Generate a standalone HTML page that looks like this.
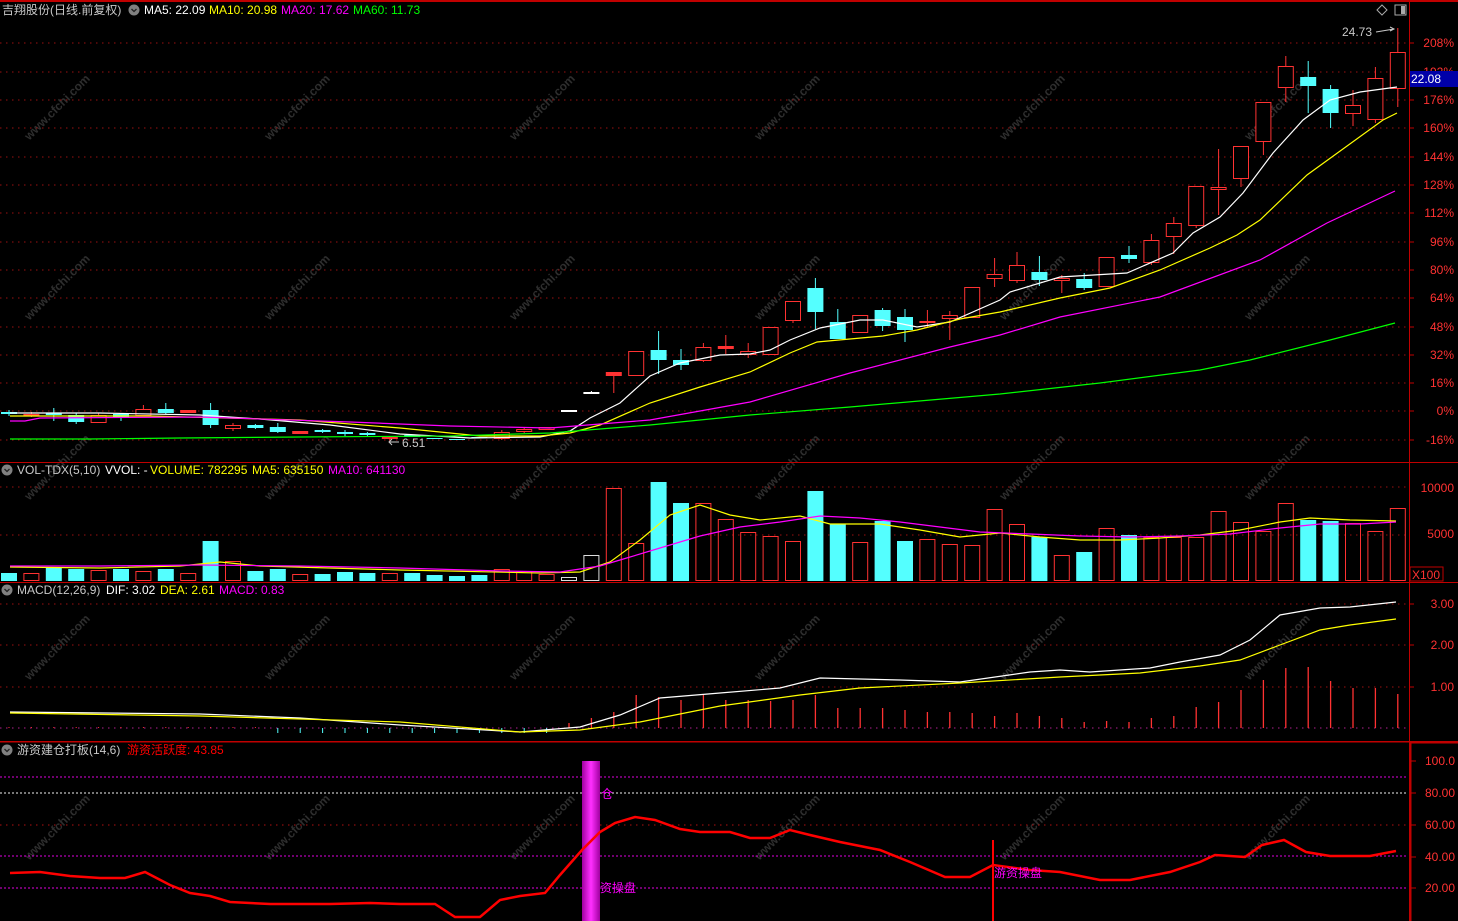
<!DOCTYPE html>
<html><head><meta charset="utf-8"><style>
html,body{margin:0;padding:0;background:#000;width:1458px;height:921px;overflow:hidden}
svg{display:block}
text{font-family:"Liberation Sans","Noto Sans CJK SC",sans-serif;font-size:12px}
</style></head><body>
<svg id="s" width="1458" height="921" xmlns="http://www.w3.org/2000/svg">
<defs>
<linearGradient id="pg" x1="0" x2="1" y1="0" y2="0">
<stop offset="0" stop-color="#a000a0"/><stop offset="0.5" stop-color="#ff30ff"/><stop offset="1" stop-color="#a000a0"/>
</linearGradient>
</defs>
<rect width="1458" height="921" fill="#000"/>
<g id="wm"></g>
<g id="grid"></g>
<g id="main"></g>
<rect x="0" y="0" width="1458" height="2" fill="#c00000"/>
<rect x="0" y="462" width="1458" height="1" fill="#c00000"/>
<rect x="0" y="582" width="1458" height="1" fill="#c00000"/>
<rect x="0" y="741" width="1458" height="1.5" fill="#c00000"/>
<rect x="1409" y="0" width="1" height="742" fill="#c00000"/>
<rect x="1409" y="742" width="2.5" height="179" fill="#c00000"/>
<rect x="1409" y="741" width="49" height="2.5" fill="#c00000"/>
<g id="ax" fill="#ff3232" font-size="12"></g>
<text x="2" y="14" fill="#c8c8c8">吉翔股份(日线.前复权)</text>
<circle cx="134" cy="10" r="5.5" fill="#808080"/><path d="M131.5 9l2.5 2.5 2.5-2.5" stroke="#222" stroke-width="1.3" fill="none"/>
<text x="144" y="14" fill="#fff">MA5: 22.09</text>
<text x="209" y="14" fill="#ffff00">MA10: 20.98</text>
<text x="281" y="14" fill="#ff00ff">MA20: 17.62</text>
<text x="353" y="14" fill="#00ff00">MA60: 11.73</text>
<path d="M1382 5l5 5-5 5-5-5z" stroke="#aaa" fill="none"/>
<rect x="1395" y="5" width="11" height="10" stroke="#aaa" fill="none"/><rect x="1401" y="6" width="4" height="8" fill="#aaa"/>
<text x="1342" y="36" fill="#c8c8c8">24.73</text>
<path d="M1376 32l18-3m-4-2l4 2-4 2" stroke="#c8c8c8" fill="none"/>
<text x="402" y="447" fill="#c8c8c8">6.51</text>
<path d="M399 442h-10m3-3l-3 3 3 3" stroke="#c8c8c8" fill="none"/>
<rect x="1410" y="71" width="48" height="16" fill="#0000a8"/>
<text x="1411" y="83" fill="#fff">22.08</text>
<circle cx="7" cy="470" r="5.5" fill="#808080"/><path d="M4.5 469l2.5 2.5 2.5-2.5" stroke="#222" stroke-width="1.3" fill="none"/>
<text x="17" y="474" fill="#c8c8c8">VOL-TDX(5,10)</text>
<text x="105" y="474" fill="#fff">VVOL: -</text>
<text x="150" y="474" fill="#ffff00">VOLUME: 782295</text>
<text x="252" y="474" fill="#ffff00">MA5: 635150</text>
<text x="328" y="474" fill="#ff00ff">MA10: 641130</text>
<circle cx="7" cy="590" r="5.5" fill="#808080"/><path d="M4.5 589l2.5 2.5 2.5-2.5" stroke="#222" stroke-width="1.3" fill="none"/>
<text x="17" y="594" fill="#c8c8c8">MACD(12,26,9)</text>
<text x="106" y="594" fill="#fff">DIF: 3.02</text>
<text x="160" y="594" fill="#ffff00">DEA: 2.61</text>
<text x="219" y="594" fill="#ff00ff">MACD: 0.83</text>
<circle cx="7" cy="750" r="5.5" fill="#808080"/><path d="M4.5 749l2.5 2.5 2.5-2.5" stroke="#222" stroke-width="1.3" fill="none"/>
<text x="17" y="754" fill="#c8c8c8">游资建仓打板(14,6)</text>
<text x="127" y="754" fill="#ff0000">游资活跃度: 43.85</text>
<rect x="1410" y="567" width="33" height="14" fill="none" stroke="#c00000"/>
<text x="1412" y="579" fill="#ff3232">X100</text>
</svg>
<script>
var S=document.getElementById('s'),NS='http://www.w3.org/2000/svg';
function el(p,t,a,txt){var e=document.createElementNS(NS,t);for(var k in a)e.setAttribute(k,a[k]);if(txt!=null)e.textContent=txt;document.getElementById(p).appendChild(e);return e;}
[110,290,470,650,830].forEach(function(y){[60,300,545,790,1035,1280].forEach(function(x){
el('wm','text',{x:x,y:y,fill:'#2e2e2e','font-size':'26','font-weight':'600',transform:'rotate(-45 '+x+' '+y+')','text-anchor':'middle'},'www.cfchi.com');});});
function hd(y,c,d){el('grid','line',{x1:0,x2:1408,y1:y,y2:y,stroke:c,'stroke-dasharray':d||'1.5 4.5'});}
var gl=[43,72,100,128,157,185,213,242,270,298,327,355,383,411,440];gl.forEach(function(y){hd(y,'#9a1010');});
[487,535].forEach(function(y){hd(y,'#9a1010');});
[604,645,687].forEach(function(y){hd(y,'#9a1010');});hd(728,'#b02090');
hd(777,'#e000e0','2 2');hd(793,'#f0f0f0','2 2');hd(825,'#b01010');hd(856,'#e000e0','2 2');hd(888,'#e000e0','2 2');
var al=['208%','192%','176%','160%','144%','128%','112%','96%','80%','64%','48%','32%','16%','0%','-16%'];
al.forEach(function(t,i){el('ax','text',{x:1454,y:gl[i]+4,'text-anchor':'end',fill:'#ff3232'},t);el('ax','line',{x1:1409,x2:1414,y1:gl[i],y2:gl[i],stroke:'#c00000'});});
[[10000,488],[5000,534]].forEach(function(a){el('ax','text',{x:1454,y:a[1]+4,'text-anchor':'end',fill:'#ff3232'},a[0]);});
[['3.00',604],['2.00',645],['1.00',687]].forEach(function(a){el('ax','text',{x:1454,y:a[1]+4,'text-anchor':'end',fill:'#ff3232'},a[0]);el('ax','line',{x1:1409,x2:1414,y1:a[1],y2:a[1],stroke:'#c00000'});});
[['100.0',761],['80.00',793],['60.00',825],['40.00',857],['20.00',888]].forEach(function(a){el('ax','text',{x:1455,y:a[1]+4,'text-anchor':'end',fill:'#ff3232'},a[0]);el('ax','line',{x1:1411,x2:1416,y1:a[1],y2:a[1],stroke:'#c00000'});});
var C=[['c',412,414,410,416],['s',414,415,412,417],['c',413,415,408,421],['c',415,422,413,424],['r',415,423,413,423],['c',414,417,413,421],['r',409,416,405,416],['c',409,413,403,414],['s',410,412,410,413],['c',410,425,403,428],
['r',425,429,423,431],['c',425,428,424,429],['c',427,432,423,433],['s',431,433,431,434],['c',430,432,429,433],['c',432,434,430,436],['c',433,435,432,436],['r',437,439,436,441],['c',435,437,435,437],['c',438,439,438,439],
['c',439,440,439,440],['c',437,438,437,438],['r',432,439,430,440],['r',429,432,427,433],['r',427,430,427,430],['w',410,410,410,410],['w',392,392,391,393],['s',372,375,372,393],['r',351,376,351,376],['c',350,360,331,374],
['c',360,365,349,370],['r',347,361,343,362],['s',346,348,335,354],['r',351,355,343,358],['r',327,355,327,355],['r',301,321,301,323],['c',288,312,278,329],['c',322,339,309,339],['r',315,333,315,333],['c',310,326,308,331],
['c',317,330,309,342],['s',321,322,310,327],['r',315,319,311,340],['r',287,318,287,318],['r',274,279,258,287],['r',265,281,252,283],['c',272,280,256,286],['r',278,281,275,293],['c',279,288,273,290],['r',257,287,257,287],
['c',255,259,246,263],['r',240,263,234,265],['r',223,237,217,254],['r',186,226,186,228],['r',187,190,149,215],['r',146,179,146,187],['r',102,142,102,155],['r',66,88,56,102],['c',77,86,61,113],['c',89,113,85,128],
['r',105,114,90,126],['r',78,120,67,123],['r',52,89,28,107]];
function X(i){return 9+22.4*i;}
C.forEach(function(c,i){var x=X(i),col=c[0]=='c'?'#54ffff':c[0]=='w'?'#fff':'#ff3232';
 if(c[3]<c[1])el('main','line',{x1:x,x2:x,y1:c[3],y2:c[1],stroke:col});
 if(c[4]>c[2])el('main','line',{x1:x,x2:x,y1:c[2],y2:c[4],stroke:col});
 var h=Math.max(c[2]-c[1],1);
 if(c[0]=='r')el('main','rect',{x:x-7.5,y:c[1]+0.5,width:15,height:Math.max(h-1,1),fill:'#000',stroke:col});
 else el('main','rect',{x:x-8,y:c[1],width:16,height:h+(c[0]=='w'||c[0]=='s'?1:0),fill:col});
});
function pl(pts,col,w){el('main','polyline',{points:pts.map(function(p){return p.join(',')}).join(' '),fill:'none',stroke:col,'stroke-width':w||1.2});}
pl([[10,413],[100,413],[200,415],[260,419],[330,425],[400,434],[470,438],[540,437],[570,431],[590,418],[620,403],[650,376],[680,363],[720,355],[750,354],[770,350],[790,340],[820,328],[860,320],[883,320],[917,327],[950,322],[1000,300],[1010,292],[1060,277],[1127,273],[1173,253],[1193,233],[1220,217],[1243,193],[1273,153],[1303,120],[1330,100],[1360,92],[1397,87]],'#fff');
pl([[10,416],[150,416],[300,420],[400,428],[480,436],[540,436],[570,433],[600,425],[650,403],[700,387],[750,372],[790,353],[817,342],[883,336],[917,330],[960,319],[1000,312],[1060,298],[1110,288],[1160,270],[1210,248],[1237,235],[1260,220],[1307,175],[1383,120],[1397,113]],'#ffff00');
pl([[10,421],[25,421],[40,418],[200,417],[350,422],[450,426],[550,428],[650,420],[750,402],[850,373],[950,347],[1000,335],[1060,317],[1160,297],[1260,260],[1327,223],[1395,191]],'#ff00ff');
pl([[10,439],[90,439],[180,438],[300,437],[450,436],[550,433],[650,425],[750,415],[850,407],[1000,394],[1100,383],[1200,370],[1250,360],[1330,340],[1395,323]],'#00ff00');
var V=[573,573,567,569,570,569,571,569,573,541,561,571,569,574,574,572,573,573,573,575,576,575,569,571,574,577,555,488,543,482,503,503,519,532,536,541,491,524,542,521,541,539,544,545,509,524,537,555,552,528,535,537,537,537,511,522,531,503,520,521,523,531,508];
V.forEach(function(t,i){var x=X(i),c=C[i][0];
 if(c=='c')el('main','rect',{x:x-8,y:t,width:16,height:581-t,fill:'#54ffff'});
 else if(c=='w')el('main','rect',{x:x-7.5,y:t+.5,width:15,height:580-t,fill:'none',stroke:'#ddd'});
 else el('main','rect',{x:x-7.5,y:t+.5,width:15,height:580-t,fill:'none',stroke:'#ff3232'});});
pl([[10,567],[100,568],[180,566],[220,562],[260,566],[400,570],[540,573],[580,572],[610,562],[640,540],[670,515],[700,505],[730,515],[760,520],[800,516],[830,524],[880,524],[920,530],[960,537],[1000,533],[1040,537],[1080,540],[1120,540],[1160,538],[1200,535],[1240,530],[1280,522],[1310,518],[1350,520],[1396,521]],'#ffff00');
pl([[10,566],[100,566],[200,565],[300,566],[400,568],[500,571],[560,572],[600,566],[620,560],[660,548],[700,536],[740,527],[780,522],[820,516],[860,518],[900,522],[940,527],[980,532],[1030,534],[1080,536],[1130,537],[1180,536],[1230,534],[1280,528],[1320,524],[1360,524],[1396,522]],'#ff00ff');
var M=[0,0,0,0,0,0,0,0,0,0,0,0,0,0,0,0,0,0,0,0,0,0,0,0,0,723,718,712,695,697,700,695,700,700,701,700,695,708,708,708,710,712,712,713,716,713,716,718,722,721,722,718,716,707,702,690,680,668,667,681,688,688,694];
M.forEach(function(t,i){var x=X(i);
 if(t)el('main','line',{x1:x,x2:x,y1:t,y2:728,stroke:'#ff3232','stroke-width':1.3});
 else if(i>=12)el('main','line',{x1:x,x2:x,y1:728,y2:733,stroke:'#54ffff'});
 else el('main','line',{x1:x,x2:x,y1:727,y2:728,stroke:'#ff3232'});});
pl([[10,712],[200,714],[300,718],[400,725],[520,732],[580,727],[620,715],[660,698],[720,693],[780,688],[820,678],[900,680],[960,682],[1030,672],[1060,670],[1090,672],[1150,668],[1180,662],[1220,655],[1250,640],[1280,615],[1320,608],[1350,607],[1396,602]],'#fff');
pl([[10,713],[200,716],[400,722],[520,732],[580,730],[640,722],[720,706],[800,695],[860,688],[960,683],[1060,677],[1140,673],[1200,666],[1240,660],[1280,645],[1320,630],[1350,625],[1396,619]],'#ffff00');
el('main','rect',{x:582,y:761,width:18,height:160,fill:'url(#pg)'});
el('main','line',{x1:993,x2:993,y1:840,y2:921,stroke:'#ff0000','stroke-width':2});
pl([[10,873],[40,872],[70,876],[100,878],[125,878],[145,872],[170,885],[190,893],[210,896],[230,902],[270,904],[330,904],[370,903],[400,904],[435,904],[455,917],[480,917],[500,900],[520,896],[545,893],[560,875],[582,850],[600,832],[615,823],[635,817],[655,820],[680,829],[700,832],[730,832],[750,838],[770,838],[790,830],[810,835],[840,842],[880,850],[910,862],[945,877],[970,877],[993,865],[1030,870],[1060,872],[1100,880],[1130,880],[1170,872],[1200,862],[1215,855],[1245,857],[1262,845],[1284,840],[1306,852],[1330,856],[1370,856],[1396,851]],'#ff0000',2.5);
el('main','text',{x:601,y:798,fill:'#ff00ff'},'仓');
el('main','text',{x:600,y:892,fill:'#ff00ff'},'资操盘');
el('main','text',{x:994,y:877,fill:'#ff00ff'},'游资操盘');
</script>
</body></html>
